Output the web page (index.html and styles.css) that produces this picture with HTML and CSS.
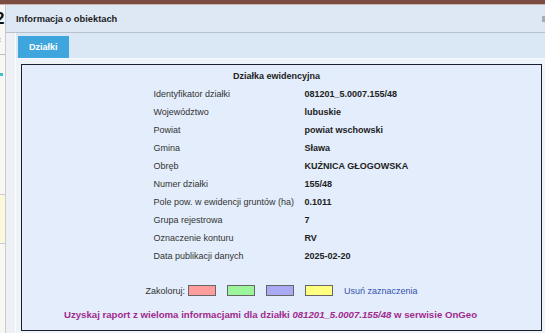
FILE: index.html
```html
<!DOCTYPE html>
<html lang="pl">
  <head>
    <meta charset="UTF-8" />
    <meta name="viewport" content="width=device-width, initial-scale=1.0" />
    <link rel="stylesheet" href="styles.css">
    <title>Informacja o obiektach</title>
  </head>
  <body>
    <div class="topbar"></div>
    <div class="desk">
      <div class="behind">
        <div class="behind-num">2</div>
        <div class="behind-link">ot</div>
        <div class="behind-line"></div>
        <div class="behind-dot"></div>
        <div class="behind-yellow"></div>
      </div>

      <div class="dialog">
        <div class="dialog-title">
          <span>Informacja o obiektach</span>
          <span class="dialog-close"></span>
        </div>
        <div class="dialog-body">
          <div class="tabs">
            <span class="tab active">Działki</span>
          </div>
          <div class="tab-panel">
            <div class="parcel">
              <table class="parcel-info">
                <tr>
                  <th colspan="2">Działka ewidencyjna</th>
                </tr>
                <tr><td>Identyfikator działki</td><td>081201_5.0007.155/48</td></tr>
                <tr><td>Województwo</td><td>lubuskie</td></tr>
                <tr><td>Powiat</td><td>powiat wschowski</td></tr>
                <tr><td>Gmina</td><td>Sława</td></tr>
                <tr><td>Obręb</td><td>KUŹNICA GŁOGOWSKA</td></tr>
                <tr><td>Numer działki</td><td>155/48</td></tr>
                <tr><td>Pole pow. w ewidencji gruntów (ha)</td><td>0.1011</td></tr>
                <tr><td>Grupa rejestrowa</td><td>7</td></tr>
                <tr><td>Oznaczenie konturu</td><td>RV</td></tr>
                <tr><td>Data publikacji danych</td><td>2025-02-20</td></tr>
              </table>

              <div class="colorize">
                <span class="colorize-label">Zakoloruj:</span>
                <span class="swatch red"></span>
                <span class="swatch green"></span>
                <span class="swatch blue"></span>
                <span class="swatch yellow"></span>
                <a class="clear-link" href="#">Usuń zaznaczenia</a>
              </div>

              <div class="report">
                <a href="#">Uzyskaj raport z wieloma informacjami dla działki <i>081201_5.0007.155/48</i> w serwisie OnGeo</a>
              </div>
            </div>
          </div>
        </div>
      </div>
    </div>
  </body>
</html>
```

FILE: styles.css
```css
html,
body {
  margin: 0;
  height: 333px;
  overflow: hidden;
}

body {
  font-family: "Liberation Sans", Arial, sans-serif;
  font-size: 9px;
  color: #222;
  background: #f6f6f2;
}

.topbar {
  height: 4px;
  background: #7c4c42;
  border-bottom: 1px solid #c9b4ae;
}

.desk {
  display: flex;
  height: 328px;
}

/* strona pod oknem */
.behind {
  width: 5px;
  overflow: hidden;
  border-right: 1px solid #c8ccd0;
  background: #f7f7f3;
}

.behind-num {
  font-size: 17px;
  font-weight: bold;
  color: #111;
  line-height: 20px;
  margin-top: 4px;
  margin-left: -5px;
}

.behind-link {
  color: #b04aa8;
  font-size: 8px;
  margin-left: -6px;
  margin-top: 6px;
}

.behind-line {
  border-top: 1px solid #bbb;
  margin-top: 10px;
}

.behind-dot {
  width: 3px;
  height: 3px;
  background: #3cc3c8;
  margin-top: 18px;
}

.behind-yellow {
  height: 48px;
  margin-top: 118px;
  background: #fbf8dc;
  border-top: 1px solid #ccc;
  border-bottom: 1px solid #ccc;
}

/* okno */
.dialog {
  flex: 1;
  display: flex;
  flex-direction: column;
  background: #edf1f6;
}

.dialog-title {
  height: 27px;
  display: flex;
  align-items: center;
  justify-content: space-between;
  padding-left: 10px;
  font-size: 9.3px;
  font-weight: bold;
  color: #222;
  background: #dde8f4;
  border-bottom: 1px solid #b9c2cb;
}

.dialog-close {
  width: 3px;
  height: 6px;
  background: #a7adb3;
}

.dialog-body {
  flex: 1;
  display: flex;
  flex-direction: column;
  margin-left: 9px;
  border-left: 1px solid #fafcfe;
}

.tabs {
  height: 22px;
  padding: 3px 0 0 2px;
  background: #dae7f4;
  border-bottom: 1px solid #f5f8fc;
}

.tab {
  display: inline-flex;
  align-items: center;
  height: 22px;
  padding: 0 11px;
  font-weight: bold;
  color: #fff;
  background: #3ea6dc;
}

.tab-panel {
  flex: 1;
  padding: 5px 3px 2px 5px;
  background: #eef3f9;
}

.parcel {
  height: 100%;
  box-sizing: border-box;
  border: 1px solid #1c1f2a;
  background: #e3edfb;
}

.parcel-info {
  width: 256px;
  margin: 2px auto 0;
  border-collapse: collapse;
}

.parcel-info th {
  height: 18px;
  padding: 0 10px 0 0;
  font-weight: bold;
  text-align: center;
}

.parcel-info td {
  height: 18px;
  padding: 0;
  white-space: nowrap;
}

.parcel-info td:first-child {
  width: 151px;
  color: #333;
}

.parcel-info td:last-child {
  font-weight: bold;
  color: #222;
}

.colorize {
  display: flex;
  align-items: center;
  justify-content: center;
  gap: 11px;
  margin-top: 20px;
}

.colorize-label {
  margin-right: -8px;
  color: #333;
}

.swatch {
  width: 26px;
  height: 9px;
  border: 1px solid #666;
}

.swatch.red {
  background: #ff9c9c;
}

.swatch.green {
  background: #9cf59a;
}

.swatch.blue {
  background: #aaaaf4;
}

.swatch.yellow {
  background: #ffff80;
}

.clear-link {
  color: #3452b0;
  text-decoration: none;
}

.report {
  margin-top: 13px;
  padding-right: 22px;
  text-align: center;
}

.report a {
  font-size: 9.65px;
  font-weight: bold;
  color: #a22a8e;
  text-decoration: none;
}
```
